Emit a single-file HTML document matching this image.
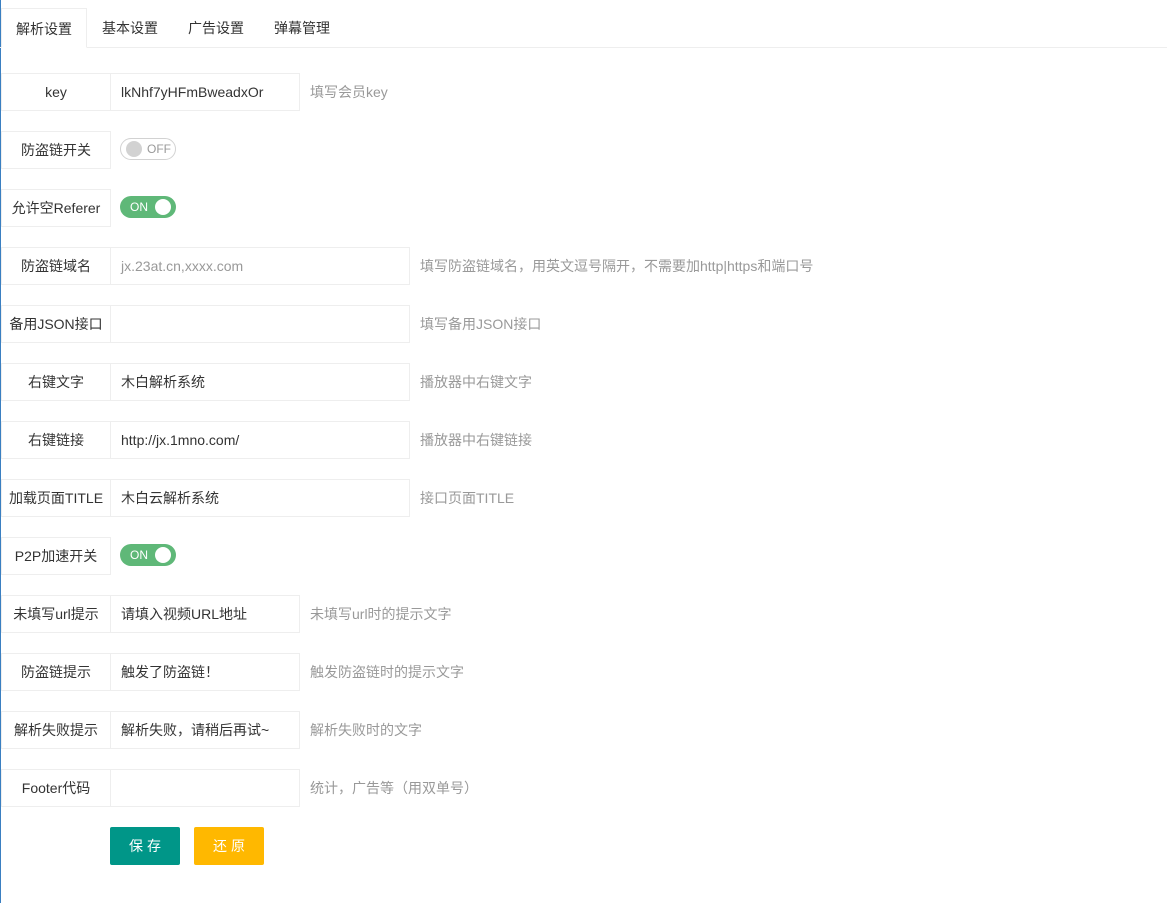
<!DOCTYPE html>
<html><head><meta charset="utf-8"><style>
*{box-sizing:border-box;margin:0;padding:0}
body{width:1167px;height:903px;background:#fff;font-family:"Liberation Sans","Noto Sans CJK SC",sans-serif;font-size:14px;color:#333;position:relative;overflow:hidden}
.edge{position:absolute;left:0;top:0;width:1px;height:903px;background:#3a7fc1}
.tabbar{position:absolute;left:0;top:47px;width:1167px;border-top:1px solid #eee}
.tab{position:absolute;top:8px;height:40px;line-height:40px;font-size:14px;color:#333;text-align:center}
.tab.act{left:1px;width:86px;border:1px solid #eee;border-bottom:1px solid #fff;background:#fff;z-index:2}
.lab{position:absolute;left:1px;width:110px;height:38px;border:1px solid #eee;line-height:36px;text-align:center;font-size:14px;color:#333;background:#fff}
.inp{position:absolute;left:110px;height:38px;border:1px solid #eee;line-height:36px;padding-left:10px;font-size:14px;color:#333}
.ph{color:#999}
.tip{position:absolute;line-height:38px;font-size:14px;color:#999}
.sw{position:absolute;left:120px;width:56px;height:22px;border-radius:11px;font-size:12px;line-height:22px}
.on{background:#5FB878;color:#fff;padding-left:10px}
.on i{position:absolute;right:5px;top:3px;width:16px;height:16px;border-radius:50%;background:#fff}
.off{border:1px solid #d2d2d2;color:#999;padding-left:26px;line-height:20px}
.off i{position:absolute;left:5px;top:2px;width:16px;height:16px;border-radius:50%;background:#d2d2d2}
.btn{position:absolute;top:827px;width:70px;height:38px;line-height:38px;color:#fff;text-align:center;border-radius:2px;letter-spacing:4px;text-indent:4px}
</style></head><body>
<div class="edge"></div>
<div class="tab act">解析设置</div>
<div class="tab" style="left:87px;width:86px">基本设置</div>
<div class="tab" style="left:173px;width:86px">广告设置</div>
<div class="tab" style="left:259px;width:86px">弹幕管理</div>
<div class="tabbar"></div>

<div class="lab" style="top:73px">key</div><div class="inp" style="top:73px;width:190px">lkNhf7yHFmBweadxOr</div><div class="tip" style="left:310px;top:73px">填写会员key</div>
<div class="lab" style="top:131px">防盗链开关</div><div class="sw off" style="top:138px"><i></i>OFF</div>
<div class="lab" style="top:189px">允许空Referer</div><div class="sw on" style="top:196px">ON<i></i></div>
<div class="lab" style="top:247px">防盗链域名</div><div class="inp ph" style="top:247px;width:300px">jx.23at.cn,xxxx.com</div><div class="tip" style="left:420px;top:247px">填写防盗链域名，用英文逗号隔开，不需要加http|https和端口号</div>
<div class="lab" style="top:305px">备用JSON接口</div><div class="inp" style="top:305px;width:300px"></div><div class="tip" style="left:420px;top:305px">填写备用JSON接口</div>
<div class="lab" style="top:363px">右键文字</div><div class="inp" style="top:363px;width:300px">木白解析系统</div><div class="tip" style="left:420px;top:363px">播放器中右键文字</div>
<div class="lab" style="top:421px">右键链接</div><div class="inp" style="top:421px;width:300px">http://jx.1mno.com/</div><div class="tip" style="left:420px;top:421px">播放器中右键链接</div>
<div class="lab" style="top:479px">加载页面TITLE</div><div class="inp" style="top:479px;width:300px">木白云解析系统</div><div class="tip" style="left:420px;top:479px">接口页面TITLE</div>
<div class="lab" style="top:537px">P2P加速开关</div><div class="sw on" style="top:544px">ON<i></i></div>
<div class="lab" style="top:595px">未填写url提示</div><div class="inp" style="top:595px;width:190px">请填入视频URL地址</div><div class="tip" style="left:310px;top:595px">未填写url时的提示文字</div>
<div class="lab" style="top:653px">防盗链提示</div><div class="inp" style="top:653px;width:190px">触发了防盗链！</div><div class="tip" style="left:310px;top:653px">触发防盗链时的提示文字</div>
<div class="lab" style="top:711px">解析失败提示</div><div class="inp" style="top:711px;width:190px">解析失败，请稍后再试~</div><div class="tip" style="left:310px;top:711px">解析失败时的文字</div>
<div class="lab" style="top:769px">Footer代码</div><div class="inp" style="top:769px;width:190px"></div><div class="tip" style="left:310px;top:769px">统计，广告等（用双单号）</div>
<div class="btn" style="left:110px;background:#009688">保存</div>
<div class="btn" style="left:194px;background:#FFB800">还原</div>
</body></html>
